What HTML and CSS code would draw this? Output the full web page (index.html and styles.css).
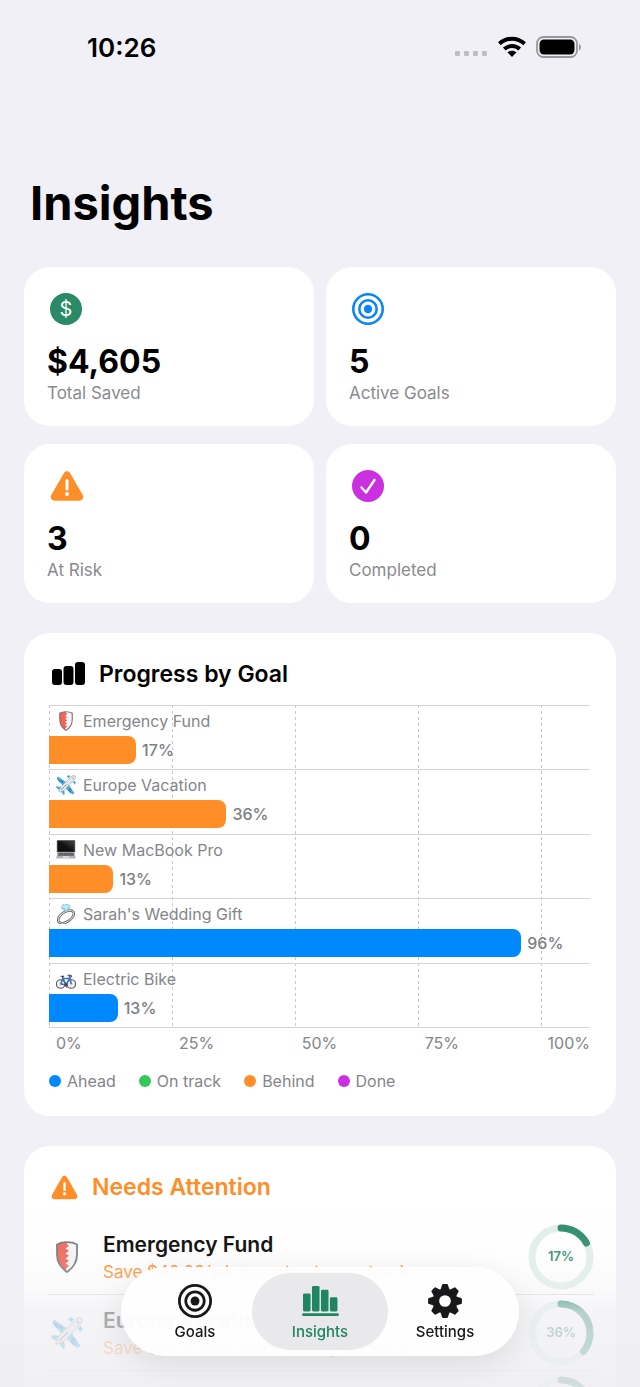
FILE: index.html
```html
<!DOCTYPE html>
<html lang="en">
<head>
<meta charset="utf-8">
<meta name="viewport" content="width=device-width, initial-scale=1">
<title>Insights</title>
<link rel="stylesheet" href="styles.css">
</head>
<body>
<svg class="defs" aria-hidden="true">
  <defs>
    <linearGradient id="screen" x1="0" y1="1" x2="1" y2="0"><stop offset="0.45" stop-color="#101012"/><stop offset="1" stop-color="#4a4a4e"/></linearGradient>
    <symbol id="shield" viewBox="0 0 24 32">
      <path d="M12 1.2C8 1.2 4.500 2 2 3.500v10C2 21.500 6 27 12 31c6-4 10-9.500 10-17.500v-10C19.500 2 16 1.200 12 1.200z" fill="#f3f3f4"/>
      <path d="M12 1.200C8 1.200 4.500 2 2 3.500v10C2 21.500 6 27 11 30.300l0-2.800 3-2.700-3.500-2.300 3.500-2.700-3.500-2.300 3.500-2.700-3.500-2.300 3.500-2.700-3.500-2.300 3.500-2.700-2-1.600z" fill="#ee6458"/>
      <path d="M12 1.200c4 0 7.500.8 10 2.300v10C22 21.500 18 27 12 31 6 27 2 21.500 2 13.500v-10C4.500 2 8 1.200 12 1.200z" fill="none" stroke="#77777b" stroke-width="1.800"/>
    </symbol>
    <symbol id="plane" viewBox="0 0 32 32">
      <path d="M17 12 3 2.500 1 6 11 17zM20 15l9.500 14-3.500 2L15 21z" fill="#45ace0"/>
      <path d="M4 7.500l3 3.400M8.500 8.500l3 3.500M24.500 24l-3.300-3M23.500 28l-3.500-4" stroke="#277fae" stroke-width="2"/>
      <path d="M9 19l-7.500-1-1.500 2.500L7 25zM13 23l1 7.500-2 1.500L7 25z" fill="#45ace0"/>
      <path d="M30.500 1.500c-2-1.400-5 0-7 2L9 17.500c-2.500 2.800-4.500 6.500-4 9.500 3 .5 6.700-1.500 9.500-4L28.500 8.500c2-2 3.400-5 2-7z" fill="#e3e6e9" stroke="#9ba2a8"/>
      <path d="M26 4l2.300 2.300M8 24 17 15" stroke="#7d858c" stroke-width="1.200"/>
      <path d="M17 2.500l3-2.500 3 2-3 3zM27 12l2.500-3 2.500 3-2.500 3z" fill="#45ace0"/>
    </symbol>
    <symbol id="laptop" viewBox="0 0 32 32">
      <path d="M2 1h28v18H2z" fill="url(#screen)" stroke="#29292b"/>
      <path d="M2 19.500h28l1.500 9.500H.5z" fill="#b2b3b6"/>
      <path d="M4 20.500h24l.6 4.500H3.400z" fill="#55565a"/>
      <path d="M4 22.700h24M8 20.500v4.300M12 20.500v4.300M16 20.500v4.300M20 20.500v4.300M24 20.500v4.300" stroke="#85868a" stroke-width=".7"/>
      <path d="M11.500 25.600h9l.5 3h-10z" fill="#d6d7da"/>
      <path d="M.5 29h31v1.500H.5z" fill="#d5d6d9"/>
    </symbol>
    <symbol id="ringgift" viewBox="0 0 32 32">
      <ellipse cx="16" cy="20.500" rx="14" ry="7.800" transform="rotate(-34 16 20.500)" fill="none" stroke="#5d5e62" stroke-width="4"/>
      <ellipse cx="16" cy="20.500" rx="14" ry="7.800" transform="rotate(-34 16 20.500)" fill="none" stroke="#d9dadd" stroke-width="1.600"/>
      <path d="M8.500 3.500 13-.2l7 .6 3 4-5.500 7-8-3.400z" fill="#9ed9f1" stroke="#64a5c0" stroke-width=".8"/>
      <path d="M8.500 3.500l7 1.500 7.500-.6M15.500 5l2 6.400M13-.2l2.500 5.200 4.500-4.600" fill="none" stroke="#e8faff"/>
    </symbol>
    <symbol id="bike" viewBox="0 0 32 32">
      <g fill="none" stroke="#59595c" stroke-width="1.800"><circle cx="7.500" cy="24" r="6.800"/><circle cx="24.500" cy="24" r="6.800"/></g>
      <path d="M7.500 17.500v13M1 24h13M24.500 17.500v13M18 24h13M3 19.500l9 9M12 19.500l-9 9M20 19.500l9 9M29 19.500l-9 9" stroke="#a9a9ac" stroke-width=".6"/>
      <path d="M7.500 24 11 15h11M11 15l5 10M7.500 24l8.500 1L22 15M24.500 24 21.300 11" fill="none" stroke="#3f70ba" stroke-width="2.400"/>
      <path d="M7.500 11.500h5.500M10.200 11.500l1 3.500M18.500 10h4.500c2 0 2 3 0 3" fill="none" stroke="#333336" stroke-width="1.800"/>
      <circle cx="16" cy="25" r="2.400" fill="#444447"/><path d="M16 25v4h2.500" fill="none" stroke="#333336" stroke-width="1.200"/>
    </symbol>
    <symbol id="target" viewBox="0 0 32 32">
      <g fill="none" stroke="currentColor"><circle cx="16" cy="16" r="14.700"/><circle cx="16" cy="16" r="8.700"/></g>
      <circle cx="16" cy="16" r="4.200" fill="currentColor"/>
    </symbol>
    <symbol id="warning" viewBox="0 0 34 31">
      <path d="M14 2.400c1.300-2.300 4.700-2.300 6 0l12.700 22.200c1.400 2.500-.2 5.600-3.200 5.600h-25c-3 0-4.600-3.100-3.200-5.600z" fill="currentColor"/>
      <path d="M17 10v8.500" stroke="#fff" stroke-width="3" stroke-linecap="round"/><circle cx="17" cy="23.500" r="2" fill="#fff"/>
    </symbol>
  </defs>
</svg>

<div class="app">
  <div class="scroll">
    <header class="status">
      <time class="clock">10:26</time>
      <div class="signals">
        <svg width="33" height="22" viewBox="0 0 33 22" fill="#bdbdc2"><rect x="0" y="15" width="5" height="5" rx="1.300"/><rect x="9" y="15" width="5" height="5" rx="1.300"/><rect x="18" y="15" width="5" height="5" rx="1.300"/><rect x="27" y="15" width="5" height="5" rx="1.300"/></svg>
        <svg width="28" height="22" viewBox="0 0 28 22"><g fill="none" stroke="#000" stroke-width="4"><path d="M1.400 7.800C8.500 1 19.500 1 26.600 7.800"/><path d="M6.300 13C10.700 9 17.300 9 21.700 13"/></g><path d="M9.500 16.300c2.500-2.200 6.500-2.200 9 0l-4.500 4.700z"/></svg>
        <svg width="46" height="22" viewBox="0 0 46 22"><rect x="1" y="1" width="40" height="20" rx="6.500" fill="none" stroke="#98989c" stroke-width="1.800"/><rect x="3.500" y="3.500" width="35" height="15" rx="4.500"/><path d="M43 8c2.600 1 2.600 5.500 0 6.500z" fill="#98989c"/></svg>
      </div>
    </header>

    <main class="content">
      <h1 class="title">Insights</h1>

      <section class="stats">
        <article class="card stat">
          <svg class="stat-icon green" viewBox="0 0 32 32"><circle cx="16" cy="16" r="16" fill="currentColor"/><text class="dollar" x="16" y="23" text-anchor="middle">$</text></svg>
          <strong class="value">$4,605</strong><span class="label">Total Saved</span>
        </article>
        <article class="card stat">
          <svg class="stat-icon target blue"><use href="#target"/></svg>
          <strong class="value">5</strong><span class="label">Active Goals</span>
        </article>
        <article class="card stat">
          <svg class="stat-icon wide orange"><use href="#warning"/></svg>
          <strong class="value">3</strong><span class="label">At Risk</span>
        </article>
        <article class="card stat">
          <svg class="stat-icon purple" viewBox="0 0 32 32"><circle cx="16" cy="16" r="16" fill="currentColor"/><path d="M9.500 17.500 14 22.500 22.500 10" fill="none" stroke="#fff" stroke-width="2.400" stroke-linecap="round" stroke-linejoin="round"/></svg>
          <strong class="value">0</strong><span class="label">Completed</span>
        </article>
      </section>

      <section class="card chart">
        <h2 class="heading">
          <svg width="33" height="24" viewBox="0 0 33 24"><rect x="0" y="7" width="10" height="16" rx="3"/><rect x="11.500" y="4" width="10" height="19" rx="3"/><rect x="23" y="0" width="10" height="23" rx="3"/></svg>
          Progress by Goal
        </h2>
        <div class="plot">
          <div class="gridlines"><i></i><i></i><i></i><i></i><i></i></div>
          <div class="rows">
            <div class="row"><div class="name"><svg class="emoji"><use href="#shield"/></svg>Emergency Fund</div><div class="track"><div class="bar behind" style="width:16.1%"></div><b class="pct">17%</b></div></div>
            <div class="row"><div class="name"><svg class="emoji"><use href="#plane"/></svg>Europe Vacation</div><div class="track"><div class="bar behind" style="width:32.8%"></div><b class="pct">36%</b></div></div>
            <div class="row"><div class="name"><svg class="emoji"><use href="#laptop"/></svg>New MacBook Pro</div><div class="track"><div class="bar behind" style="width:11.9%"></div><b class="pct">13%</b></div></div>
            <div class="row"><div class="name"><svg class="emoji"><use href="#ringgift"/></svg>Sarah's Wedding Gift</div><div class="track"><div class="bar ahead" style="width:87.3%"></div><b class="pct">96%</b></div></div>
            <div class="row"><div class="name"><svg class="emoji"><use href="#bike"/></svg>Electric Bike</div><div class="track"><div class="bar ahead" style="width:12.7%"></div><b class="pct">13%</b></div></div>
          </div>
        </div>
        <div class="axis"><span>0%</span><span>25%</span><span>50%</span><span>75%</span><span>100%</span></div>
        <ul class="legend">
          <li><i class="dot ahead"></i>Ahead</li>
          <li><i class="dot on-track"></i>On track</li>
          <li><i class="dot behind"></i>Behind</li>
          <li><i class="dot done"></i>Done</li>
        </ul>
      </section>

      <section class="card attention">
        <h2 class="heading orange"><svg width="27" height="25"><use href="#warning"/></svg>Needs Attention</h2>
        <ul class="goals">
          <li class="goal">
            <svg class="goal-icon"><use href="#shield"/></svg>
            <div class="goal-text"><strong class="goal-name">Emergency Fund</strong><span class="advice">Save $48.08/wk more to stay on track</span></div>
            <svg class="ring" viewBox="0 0 66 66"><circle class="ring-track" cx="33" cy="33" r="29"/><circle class="ring-fill" cx="33" cy="33" r="29" pathLength="100" stroke-dasharray="17 100"/><text class="ring-text" x="33" y="37" text-anchor="middle">17%</text></svg>
          </li>
          <li class="goal">
            <svg class="goal-icon"><use href="#plane"/></svg>
            <div class="goal-text"><strong class="goal-name">Europe Vacation</strong><span class="advice">Save $95.43/wk more to stay on track</span></div>
            <svg class="ring" viewBox="0 0 66 66"><circle class="ring-track" cx="33" cy="33" r="29"/><circle class="ring-fill" cx="33" cy="33" r="29" pathLength="100" stroke-dasharray="36 100"/><text class="ring-text" x="33" y="37" text-anchor="middle">36%</text></svg>
          </li>
          <li class="goal">
            <svg class="goal-icon"><use href="#laptop"/></svg>
            <div class="goal-text"><strong class="goal-name">New MacBook Pro</strong><span class="advice">Save $61.20/wk more to stay on track</span></div>
            <svg class="ring" viewBox="0 0 66 66"><circle class="ring-track" cx="33" cy="33" r="29"/><circle class="ring-fill" cx="33" cy="33" r="29" pathLength="100" stroke-dasharray="13 100"/><text class="ring-text" x="33" y="37" text-anchor="middle">13%</text></svg>
          </li>
        </ul>
      </section>
    </main>
  </div>

  <div class="fade"></div>
  <nav class="tabs">
    <button class="tab" type="button"><svg class="tab-icon target"><use href="#target"/></svg>Goals</button>
    <button class="tab selected" type="button" aria-current="page"><svg class="tab-icon" viewBox="0 0 36 34" fill="currentColor"><rect x="0" y="9" width="8" height="19" rx="1.500"/><rect x="9.500" y="1" width="8" height="27" rx="1.500"/><rect x="19" y="5" width="8" height="23" rx="1.500"/><rect x="28.500" y="13" width="8" height="15" rx="1.500"/><rect x="-1" y="30" width="39" height="3" rx="1.500"/></svg>Insights</button>
    <button class="tab" type="button"><svg class="tab-icon" viewBox="-18 -18 36 36" fill="currentColor"><path id="tooth" d="M-5-11-3.200-17q.3-.9 1.200-.9h4q.9 0 1.200.9L5-11z"/><use href="#tooth" transform="rotate(45)"/><use href="#tooth" transform="rotate(90)"/><use href="#tooth" transform="rotate(135)"/><use href="#tooth" transform="rotate(180)"/><use href="#tooth" transform="rotate(225)"/><use href="#tooth" transform="rotate(270)"/><use href="#tooth" transform="rotate(315)"/><circle r="9.700" fill="none" stroke="currentColor" stroke-width="7"/></svg>Settings</button>
  </nav>
</div>
</body>
</html>
```
FILE: styles.css
```css
* { box-sizing: border-box; }

body {
  margin: 0;
  background: #f1f0f6;
  color: #000;
  font-family: Inter, "Liberation Sans", sans-serif;
}

h1, h2, ul { margin: 0; padding: 0; }
ul { list-style: none; }
svg { flex: none; overflow: visible; }

.defs { position: absolute; width: 0; height: 0; }

.app { position: relative; height: 100vh; overflow: hidden; }
.scroll { height: 100%; overflow-y: auto; scrollbar-width: none; }

.green { color: #2a8a68; }
.blue { color: #0b86f5; }
.orange { color: #ff8d28; }
.purple { color: #cb30e0; }

.status {
  display: flex;
  align-items: center;
  justify-content: space-between;
  height: 94px;
  padding: 0 58px 0 87px;
}
.clock { font-size: 26px; font-weight: 600; }
.signals { display: flex; align-items: center; gap: 10px; }

.content { padding: 79px 24px 40px; }
.title { padding-left: 6px; font-size: 47px; line-height: 60px; font-weight: 700; }

.card { background: #fff; border-radius: 26px; }

.stats {
  display: grid;
  grid-template-columns: 1fr 1fr;
  gap: 18px 12px;
  margin-top: 34px;
}
.stat {
  display: flex;
  flex-direction: column;
  align-items: flex-start;
  padding: 26px 23px 21px;
}
.stat-icon { width: 32px; height: 32px; margin-left: 3px; }
.stat-icon.wide { width: 34px; }
.target { stroke-width: 2.6px; }
.dollar { fill: #fff; font-size: 20px; font-weight: 400; }
.value { margin-top: 17px; font-size: 32px; line-height: 40px; font-weight: 700; }
.label { font-size: 17px; line-height: 23px; color: #8a8a8e; }

.chart { margin-top: 30px; padding: 26px 26px 24px 25px; }
.heading {
  display: flex;
  align-items: center;
  gap: 14px;
  padding-left: 3px;
  font-size: 23px;
  line-height: 30px;
  font-weight: 600;
}

.plot { display: grid; margin-top: 16px; height: 323px; }
.gridlines, .rows { grid-area: 1 / 1; }
.gridlines, .axis { display: grid; grid-template-columns: repeat(4, 10fr) 4fr; }
.gridlines i {
  width: 1px;
  background: repeating-linear-gradient(#c8c8cb 0 3px, transparent 3px 6px);
}
.rows {
  display: grid;
  grid-template-rows: repeat(5, 1fr);
  border-bottom: 1px solid #d4d4d6;
}
.row { border-top: 1px solid #d4d4d6; }
.name {
  display: flex;
  align-items: center;
  gap: 7px;
  height: 30px;
  padding-left: 7px;
  font-size: 16px;
  color: #858589;
}
.emoji { width: 20px; height: 20px; }
.track { display: flex; align-items: center; gap: 6px; }
.bar { height: 28px; border-radius: 0 8px 8px 0; }
.pct { font-size: 16px; font-weight: 500; color: #7e7e82; }

.ahead { background: #0088ff; }
.behind { background: #ff8d28; }
.on-track { background: #34c759; }
.done { background: #cb30e0; }

.axis { margin-top: 4px; font-size: 16px; line-height: 22px; color: #858589; }
.axis span { padding-left: 7px; white-space: nowrap; }
.legend {
  display: flex;
  gap: 23px;
  margin-top: 16px;
  font-size: 16px;
  line-height: 22px;
  color: #858589;
}
.legend li { display: flex; align-items: center; gap: 6px; }
.dot { width: 12px; height: 12px; border-radius: 50%; }

.attention { margin-top: 30px; padding: 26px 22px 24px 25px; }
.attention .heading { padding-left: 2px; }
.goals { margin-top: 17px; }
.goal { display: flex; align-items: center; height: 76px; border-bottom: 1px solid #dedee1; }
.goal:last-child { border-bottom: 0; }
.goal-icon { width: 32px; height: 32px; margin-left: 2px; }
.goal-text {
  display: flex;
  flex: 1;
  flex-direction: column;
  margin-left: 20px;
  padding-top: 3px;
}
.goal-name { font-size: 21px; line-height: 28px; font-weight: 600; }
.advice { font-size: 17px; line-height: 26px; color: #ff8d28; }
.ring { width: 66px; height: 66px; }
.ring circle { fill: none; stroke-width: 7px; }
.ring-track { stroke: #e0efe9; }
.ring-fill {
  stroke: #2a8a68;
  stroke-linecap: round;
  transform: rotate(-90deg);
  transform-origin: center;
}
.ring-text { fill: #2a8a68; font-size: 13px; font-weight: 600; }

.fade {
  position: absolute;
  inset: auto 0 0;
  height: 187px;
  pointer-events: none;
  background: linear-gradient(
    rgba(240, 240, 244, 0) 0,
    rgba(240, 240, 244, .12) 60px,
    rgba(240, 240, 244, .35) 90px,
    rgba(240, 240, 244, .7) 112px,
    rgba(238, 238, 242, .85) 187px
  );
}

.tabs {
  position: absolute;
  bottom: 31px;
  left: 50%;
  display: flex;
  padding: 6px;
  transform: translateX(-50%);
  border-radius: 45px;
  background: rgba(254, 254, 255, .95);
  backdrop-filter: blur(1px);
  box-shadow: 0 8px 30px rgba(0, 0, 0, .09);
}
.tab {
  display: flex;
  flex-direction: column;
  align-items: center;
  gap: 4px;
  width: 136px;
  padding: 11px 0 8px;
  border: 0;
  border-radius: 39px;
  background: none;
  color: #18181a;
  font: 500 15px/20px Inter, "Liberation Sans", sans-serif;
}
.tab + .tab { margin-left: -11px; }
.tab.selected { background: #e9e9eb; color: #1f8562; }
.tab-icon { width: 34px; height: 34px; }
```
